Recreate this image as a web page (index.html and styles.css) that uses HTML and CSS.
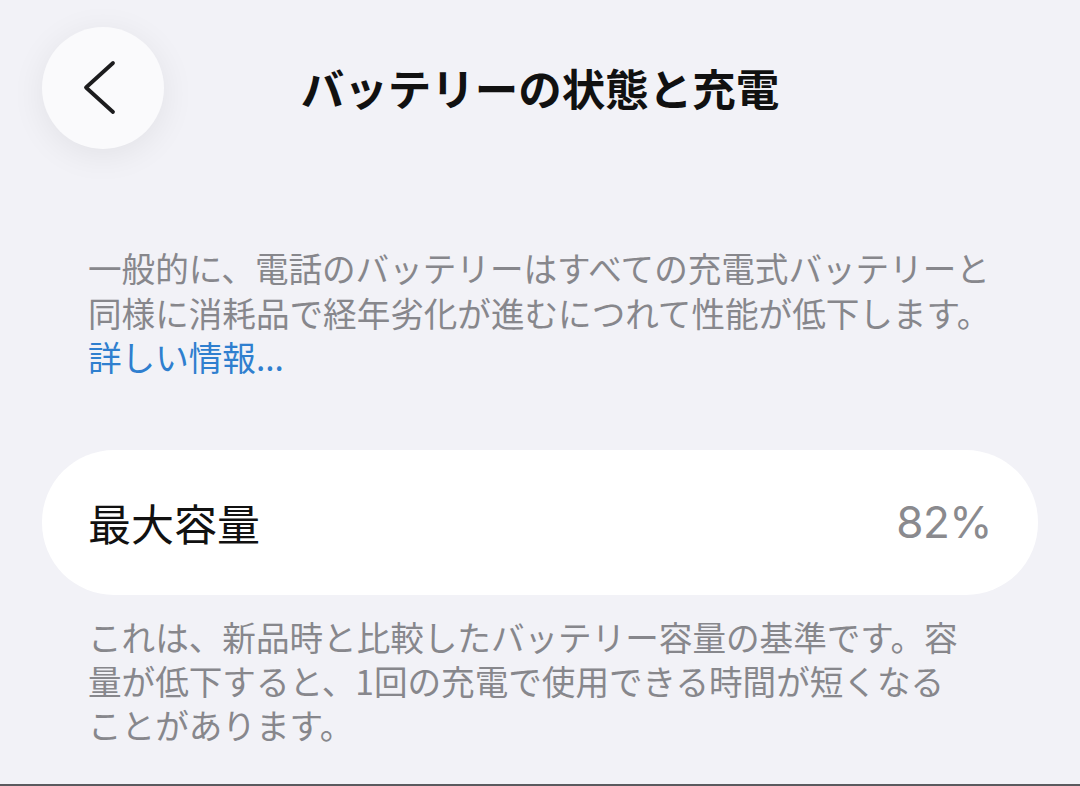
FILE: index.html
```html
<!DOCTYPE html>
<html lang="ja">
<head>
<meta charset="utf-8">
<title>バッテリーの状態と充電</title>
<link rel="stylesheet" href="styles.css">
</head>
<body>
<div class="screen">
  <header class="nav">
    <div class="nav-left">
      <button class="back" aria-label="戻る">
        <svg width="122" height="122" viewBox="0 0 122 122">
          <polyline points="71,36 44,60.5 71,85" fill="none" stroke="#1c1c1e" stroke-width="3.8" stroke-linecap="round" stroke-linejoin="round"/>
        </svg>
      </button>
    </div>
    <h1 class="title">バッテリーの状態と充電</h1>
    <div class="nav-right"></div>
  </header>

  <p class="note intro">一般的に、電話のバッテリーはすべての充電式バッテリーと<br>同様に消耗品で経年劣化が進むにつれて性能が低下します。<br><a class="link" href="#">詳しい情報...</a></p>

  <div class="card">
    <span class="label">最大容量</span>
    <span class="value">82%</span>
  </div>

  <p class="note footer">これは、新品時と比較したバッテリー容量の基準です。容<br>量が低下すると、1回の充電で使用できる時間が短くなる<br>ことがあります。</p>
</div>
<div class="bottom-line"></div>
</body>
</html>
```

FILE: styles.css
```css
* { box-sizing: border-box; }
html, body {
  margin: 0;
  padding: 0;
  background: #f2f2f7;
}
body {
  width: 1080px;
  height: 786px;
  overflow: hidden;
  position: relative;
  font-family: "Noto Sans CJK JP", "Noto Sans", sans-serif;
}
.screen {
  padding: 27px 42px 0 42px;
}
.nav {
  display: grid;
  grid-template-columns: 1fr auto 1fr;
  align-items: center;
  height: 122px;
}
.back {
  width: 122px;
  height: 122px;
  border-radius: 50%;
  border: none;
  padding: 0;
  background: #fafafc;
  box-shadow: 0 6px 34px rgba(0, 0, 0, 0.07);
  display: block;
}
.back svg { display: block; }
.title {
  margin: 0;
  font-size: 43.5px;
  font-weight: 700;
  color: #111;
  line-height: 1;
  letter-spacing: 0;
}
.note {
  margin: 0;
  padding-left: 46px;
  font-size: 33.6px;
  line-height: 44.5px;
  color: #87878c;
  white-space: nowrap;
}
.intro { margin-top: 97px; }
.link {
  color: #2f7fcf;
  text-decoration: none;
}
.card {
  margin-top: 70px;
  height: 145px;
  border-radius: 72px;
  background: #ffffff;
  display: flex;
  align-items: center;
  justify-content: space-between;
  padding: 0 46px;
}
.label {
  font-size: 43px;
  color: #111;
  line-height: 1;
}
.value {
  font-family: "Inter", "Noto Sans", sans-serif;
  font-size: 44px;
  color: #8a8a8e;
  line-height: 1;
  letter-spacing: -0.5px;
}
.footer {
  margin-top: 20px;
  line-height: 44px;
}
.bottom-line {
  position: absolute;
  left: 0;
  right: 0;
  bottom: 0;
  height: 2px;
  background: #5a5a5e;
}
```
